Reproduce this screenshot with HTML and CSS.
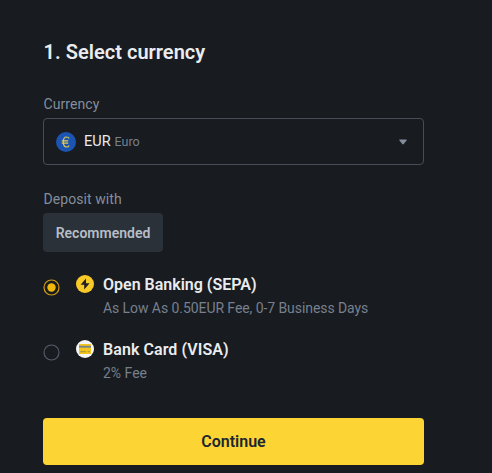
FILE: index.html
```
<!DOCTYPE html>
<html lang="en">
  <head>
    <meta charset="UTF-8" />
    <meta name="viewport" content="width=device-width, initial-scale=1.0" />
    <title>Select currency</title>
    <link rel="stylesheet" href="styles.css">
  </head>
  <body>
    <main class="deposit">
      <h2 class="title">1. Select currency</h2>

      <div class="label currency-label">Currency</div>
      <div class="select">
        <svg class="coin" viewBox="0 0 20 20">
          <circle cx="10" cy="10" r="10" fill="#1c54b2" />
          <path d="M13.2 6.4C12.5 5.5 11.7 5 10.6 5C8.5 5 7.3 7 7.3 10C7.3 13 8.5 15 10.6 15C11.7 15 12.5 14.5 13.2 13.6M5.8 8.8H12.2M5.8 11.2H12.2" fill="none" stroke="#e5cb4d" stroke-width="1.2" />
        </svg>
        <span class="code">EUR</span>
        <span class="name">Euro</span>
        <svg class="arrow" viewBox="0 0 8 6">
          <path d="M0.8 0.5H7.2Q8 0.7 7.5 1.5L4.7 5.1Q4 5.8 3.3 5.1L0.5 1.5Q0 0.7 0.8 0.5Z" />
        </svg>
      </div>

      <div class="label deposit-label">Deposit with</div>
      <button class="tag">Recommended</button>

      <div class="option">
        <svg class="radio" viewBox="0 0 17 17">
          <circle cx="8.5" cy="8.5" r="7.5" fill="none" stroke="#cf9f12" stroke-width="1.2" />
          <circle cx="8.5" cy="8.5" r="4.2" fill="#f0b90b" />
        </svg>
        <svg class="method-icon" viewBox="0 0 18 18">
          <circle cx="9" cy="9" r="9" fill="#f8ca27" />
          <path d="M10 3.6L4.6 9.8H8.2V14.4L13.6 8.2H10Z" fill="#1e2026" />
        </svg>
        <div class="method">
          <div class="method-name">Open Banking (SEPA)</div>
          <div class="method-info">As Low As 0.50EUR Fee, 0-7 Business Days</div>
        </div>
      </div>

      <div class="option">
        <svg class="radio" viewBox="0 0 17 17">
          <circle cx="8.5" cy="8.5" r="7.5" fill="none" stroke="#575e6a" stroke-width="1.1" />
        </svg>
        <svg class="method-icon" viewBox="0 0 18 18">
          <circle cx="9" cy="9" r="9" fill="#f5f5f5" />
          <rect x="3" y="4" width="12" height="10" rx="0.6" fill="#f3c51f" />
          <rect x="3" y="5.8" width="12" height="1.8" fill="#76808f" />
          <path d="M4.2 11.7H10M11.5 11.7H13.8" stroke="#8f8045" stroke-width="0.8" />
        </svg>
        <div class="method">
          <div class="method-name visa">Bank Card (VISA)</div>
          <div class="method-info fee">2% Fee</div>
        </div>
      </div>

      <button class="continue">Continue</button>
    </main>
  </body>
</html>
```
FILE: styles.css
```
* {
  margin: 0;
  padding: 0;
  box-sizing: border-box;
}

body {
  font-family: 'Roboto', sans-serif;
  background-color: #181b1f;
  color: #eaecef;
}
svg {
  display: block;
  flex: none;
}
button {
  display: block;
  border: none;
  border-radius: 4px;
  font-family: inherit;
  font-weight: 600;
  cursor: pointer;
}
.deposit {
  width: 424px;
  height: 473px;
  padding: 38px 0 0 43px;
}
.title {
  padding-left: 0.5px;
  font-size: 20px;
  font-weight: 600;
  line-height: 28px;
  letter-spacing: 0.03px;
}
.label {
  padding-left: 0.5px;
  font-size: 14px;
  line-height: 20px;
  letter-spacing: 0.07px;
  color: #848e9c;
}
.currency-label {
  margin-top: 28px;
}
.select {
  display: flex;
  align-items: center;
  height: 47px;
  margin-top: 4px;
  padding: 0 16px 0 12px;
  border: 1px solid #474d57;
  border-radius: 4px;
}
.coin {
  width: 20px;
  height: 20px;
}
.code {
  margin-left: 8px;
  font-size: 14.5px;
}
.name {
  margin-left: 4px;
  font-size: 12.5px;
  color: #76808e;
}
.arrow {
  width: 8px;
  height: 6px;
  margin-left: auto;
  fill: #848e9c;
}
.deposit-label {
  margin-top: 24px;
}
.tag {
  width: 120px;
  height: 39px;
  margin-top: 4px;
  background-color: #2b3139;
  color: #b7bdc6;
  font-size: 14px;
}
.option {
  display: flex;
  height: 65px;
}
.tag + .option {
  margin-top: 21px;
}
.radio {
  width: 17px;
  height: 17px;
  margin-top: 6px;
}
.method-icon {
  width: 18px;
  height: 18px;
  margin: 2px 9px 0 16px;
}
.method-name {
  font-size: 16px;
  font-weight: 600;
  line-height: 24px;
}
.visa {
  letter-spacing: 0.07px;
}
.method-info {
  font-size: 14px;
  line-height: 22px;
  letter-spacing: -0.07px;
  color: #76808e;
}
.fee {
  letter-spacing: 0;
}
.continue {
  width: 100%;
  height: 47.5px;
  margin-top: 14.5px;
  background-color: #fcd535;
  color: #202630;
  font-size: 16px;
}
```
